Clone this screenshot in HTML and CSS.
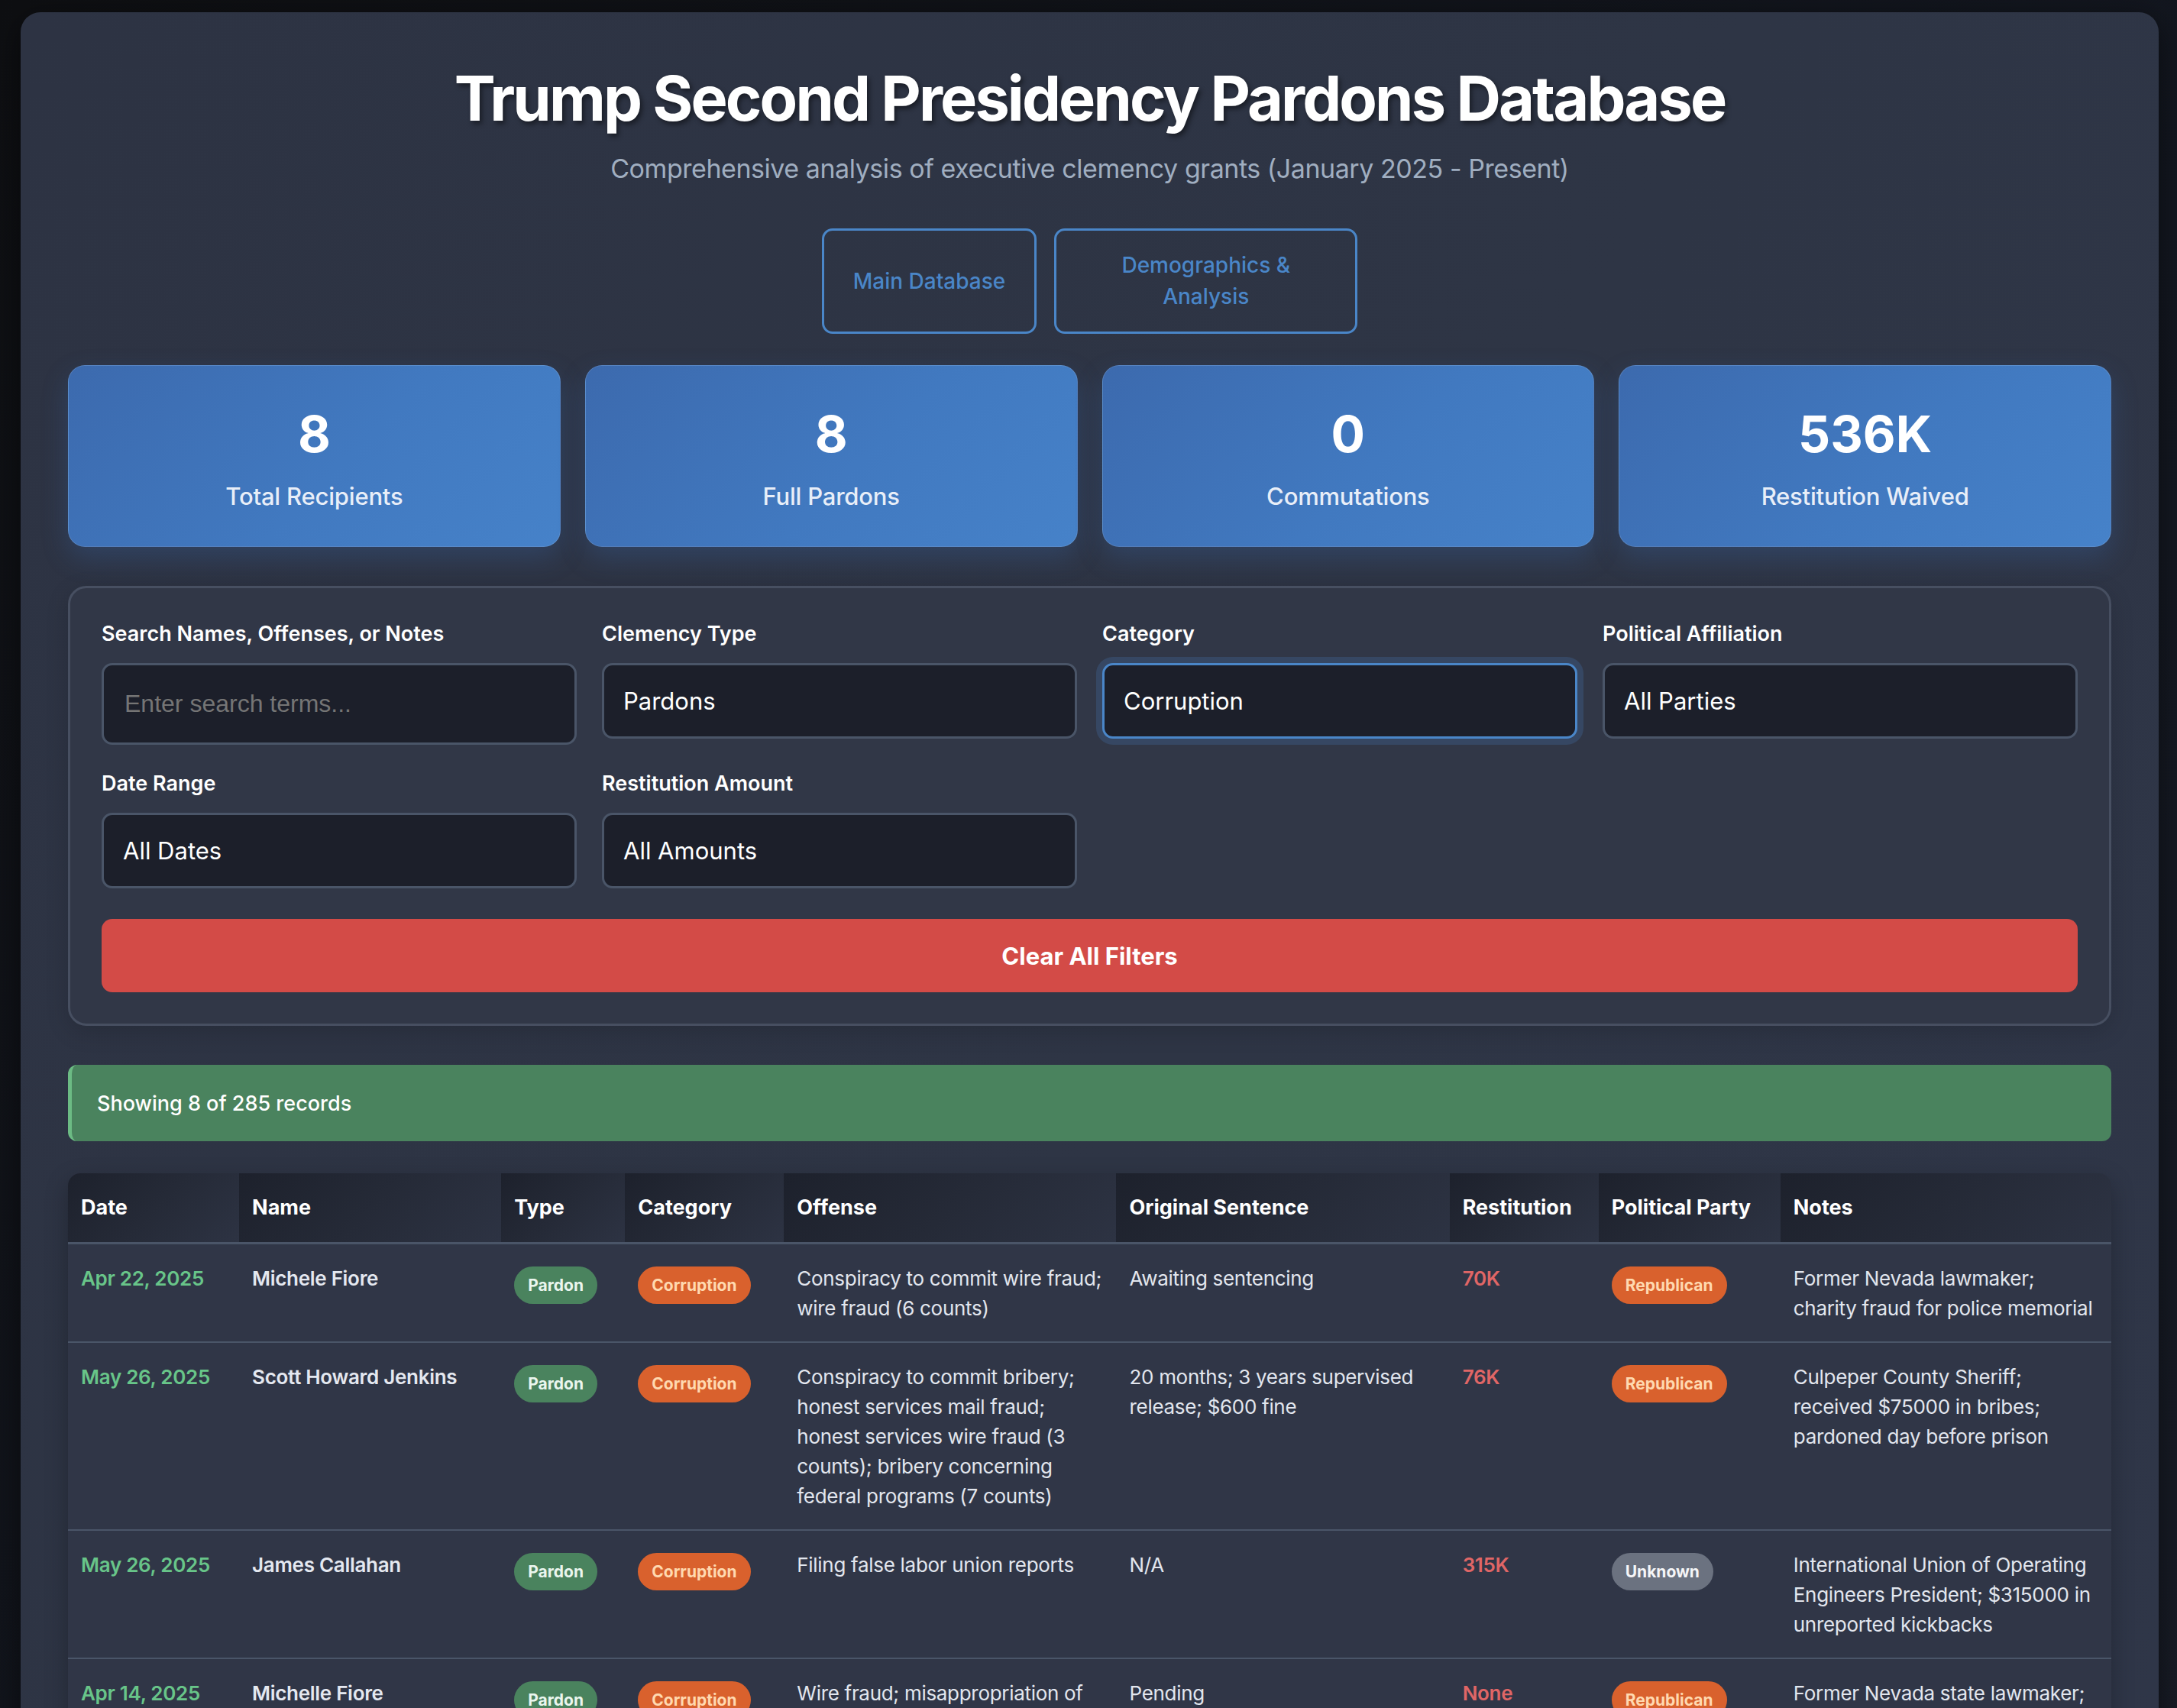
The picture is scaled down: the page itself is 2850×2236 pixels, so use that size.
FILE: index.html
```html
<!DOCTYPE html>
<html lang="en">
<head>
<meta charset="utf-8">
<title>Trump Second Presidency Pardons Database</title>
<link rel="stylesheet" href="styles.css">
</head>
<body>
<div class="container">
  <header class="header">
    <h1 class="title">Trump Second Presidency Pardons Database</h1>
    <p class="subtitle">Comprehensive analysis of executive clemency grants (January 2025 - Present)</p>
    <nav class="nav">
      <button class="nav-btn">Main Database</button>
      <button class="nav-btn nav-btn-wide">Demographics &amp; Analysis</button>
    </nav>
  </header>

  <section class="stats">
    <div class="stat-card"><div class="stat-num">8</div><div class="stat-label">Total Recipients</div></div>
    <div class="stat-card"><div class="stat-num">8</div><div class="stat-label">Full Pardons</div></div>
    <div class="stat-card"><div class="stat-num">0</div><div class="stat-label">Commutations</div></div>
    <div class="stat-card"><div class="stat-num">536K</div><div class="stat-label">Restitution Waived</div></div>
  </section>

  <section class="filters">
    <div class="filter-grid">
      <div class="field">
        <label class="field-label">Search Names, Offenses, or Notes</label>
        <input class="text-input" type="text" placeholder="Enter search terms...">
      </div>
      <div class="field">
        <label class="field-label">Clemency Type</label>
        <select class="select"><option>Pardons</option></select>
      </div>
      <div class="field">
        <label class="field-label">Category</label>
        <select class="select select-focus"><option>Corruption</option></select>
      </div>
      <div class="field">
        <label class="field-label">Political Affiliation</label>
        <select class="select"><option>All Parties</option></select>
      </div>
      <div class="field">
        <label class="field-label">Date Range</label>
        <select class="select"><option>All Dates</option></select>
      </div>
      <div class="field">
        <label class="field-label">Restitution Amount</label>
        <select class="select"><option>All Amounts</option></select>
      </div>
    </div>
    <button class="clear-btn">Clear All Filters</button>
  </section>

  <div class="results-bar">Showing 8 of 285 records</div>

  <div class="table-wrap">
    <table class="data-table">
      <colgroup>
        <col class="c-date"><col class="c-name"><col class="c-type"><col class="c-cat"><col class="c-off"><col class="c-sent"><col class="c-rest"><col class="c-party"><col class="c-notes">
      </colgroup>
      <thead>
        <tr>
          <th>Date</th><th>Name</th><th>Type</th><th>Category</th><th>Offense</th><th>Original Sentence</th><th>Restitution</th><th>Political Party</th><th>Notes</th>
        </tr>
      </thead>
      <tbody>
        <tr>
          <td class="date">Apr 22, 2025</td>
          <td class="name">Michele Fiore</td>
          <td><span class="badge badge-pardon">Pardon</span></td>
          <td><span class="badge badge-orange">Corruption</span></td>
          <td>Conspiracy to commit wire fraud; wire fraud (6 counts)</td>
          <td>Awaiting sentencing</td>
          <td class="money">70K</td>
          <td><span class="badge badge-orange">Republican</span></td>
          <td>Former Nevada lawmaker; charity fraud for police memorial</td>
        </tr>
        <tr>
          <td class="date">May 26, 2025</td>
          <td class="name">Scott Howard Jenkins</td>
          <td><span class="badge badge-pardon">Pardon</span></td>
          <td><span class="badge badge-orange">Corruption</span></td>
          <td>Conspiracy to commit bribery; honest services mail fraud; honest services wire fraud (3 counts); bribery concerning federal programs (7 counts)</td>
          <td>20 months; 3 years supervised release; $600 fine</td>
          <td class="money">76K</td>
          <td><span class="badge badge-orange">Republican</span></td>
          <td>Culpeper County Sheriff; received $75000 in bribes; pardoned day before prison</td>
        </tr>
        <tr>
          <td class="date">May 26, 2025</td>
          <td class="name">James Callahan</td>
          <td><span class="badge badge-pardon">Pardon</span></td>
          <td><span class="badge badge-orange">Corruption</span></td>
          <td>Filing false labor union reports</td>
          <td>N/A</td>
          <td class="money">315K</td>
          <td><span class="badge badge-grey">Unknown</span></td>
          <td>International Union of Operating Engineers President; $315000 in unreported kickbacks</td>
        </tr>
        <tr>
          <td class="date">Apr 14, 2025</td>
          <td class="name">Michelle Fiore</td>
          <td><span class="badge badge-pardon">Pardon</span></td>
          <td><span class="badge badge-orange">Corruption</span></td>
          <td>Wire fraud; misappropriation of charitable funds</td>
          <td>Pending</td>
          <td class="money">None</td>
          <td><span class="badge badge-orange">Republican</span></td>
          <td>Former Nevada state lawmaker; pardoned before sentencing</td>
        </tr>
      </tbody>
    </table>
  </div>
</div>
</body>
</html>
```

FILE: styles.css
```css
* { box-sizing: border-box; }

html, body {
  margin: 0;
}

body {
  background: linear-gradient(135deg, #0e0f12 0%, #131720 60%, #181c26 100%);
  padding: 16px 24px 0 27px;
  font-family: Inter, "Noto Sans", "Liberation Sans", sans-serif;
  color: #e2e8f0;
  min-height: 2236px;
}

.container {
  background: linear-gradient(120deg, #2d3343 0%, #2e3545 55%, #2f3648 100%);
  border-radius: 26px;
  padding: 65px 62px 60px;
  box-shadow: 0 10px 40px rgba(0, 0, 0, 0.5);
}

/* Header */
.header {
  text-align: center;
}

.title {
  margin: 0 0 18px;
  font-size: 81px;
  line-height: 96px;
  font-weight: 700;
  letter-spacing: -2.9px;
  color: #ffffff;
  text-shadow: 3px 4px 6px rgba(0, 0, 0, 0.45);
}

.subtitle {
  margin: 0 0 53px;
  font-size: 34px;
  line-height: 51px;
  letter-spacing: -0.45px;
  color: #a0aec0;
  font-weight: 400;
}

.nav {
  display: flex;
  justify-content: center;
  gap: 23px;
  margin-bottom: 41px;
}

.nav-btn {
  font-family: Inter, "Noto Sans", sans-serif;
  font-size: 28px;
  line-height: 41px;
  font-weight: 500;
  color: #4a86c8;
  background: transparent;
  border: 3px solid #4a86c8;
  border-radius: 14px;
  padding: 25px 38px;
  white-space: nowrap;
}

.nav-btn-wide {
  width: 397px;
  white-space: normal;
}

/* Stats */
.stats {
  display: grid;
  grid-template-columns: repeat(4, 1fr);
  gap: 32px;
  margin-bottom: 51px;
}

.stat-card {
  height: 238px;
  border-radius: 22px;
  background: linear-gradient(135deg, #3c6aae 0%, #4179c0 55%, #4682c9 100%);
  border: 1px solid rgba(255, 255, 255, 0.12);
  box-shadow: 0 14px 34px rgba(58, 108, 178, 0.28);
  text-align: center;
  padding: 50px 20px 40px;
  color: #ffffff;
}

.stat-num {
  font-size: 66px;
  line-height: 79px;
  font-weight: 700;
  margin-bottom: 19px;
}

.stat-label {
  font-size: 31px;
  line-height: 46px;
  font-weight: 500;
  letter-spacing: -0.2px;
  color: #e8eef8;
}

/* Filters */
.filters {
  background: #313747;
  border: 3px solid #474f61;
  border-radius: 24px;
  padding: 44px 41px 41px;
  margin-bottom: 51px;
  box-shadow: 0 8px 30px rgba(0, 0, 0, 0.15);
}

.filter-grid {
  display: grid;
  grid-template-columns: repeat(4, 1fr);
  column-gap: 33px;
  row-gap: 35px;
  align-items: start;
}

.field {
  display: flex;
  flex-direction: column;
}

.field-label {
  font-size: 27px;
  line-height: 32px;
  font-weight: 600;
  color: #ffffff;
  margin-bottom: 22px;
}

.text-input {
  height: 107px;
  background: #1c1f2a;
  border: 3px solid #4a5568;
  border-radius: 14px;
  padding: 0 27px;
  font-family: "Liberation Sans", Arial, sans-serif;
  font-size: 32px;
  color: #ffffff;
  outline: none;
}

.text-input::placeholder {
  color: #757575;
}

.select {
  -webkit-appearance: none;
  appearance: none;
  height: 99px;
  background: #1c1f2a;
  border: 3px solid #4a5568;
  border-radius: 14px;
  padding: 0 25px;
  font-family: Inter, "Noto Sans", sans-serif;
  font-size: 31px;
  color: #ffffff;
  outline: none;
}

.select-focus {
  border-color: #4a86c8;
  box-shadow: 0 0 0 8px rgba(74, 134, 200, 0.22);
}

.clear-btn {
  display: block;
  width: 100%;
  height: 96px;
  margin-top: 40px;
  background: #d34b47;
  border: none;
  border-radius: 14px;
  color: #ffffff;
  font-family: Inter, "Noto Sans", sans-serif;
  font-size: 31px;
  font-weight: 700;
}

/* Results bar */
.results-bar {
  height: 100px;
  display: flex;
  align-items: center;
  background: #4a835e;
  border-left: 5px solid #6cbb84;
  border-radius: 12px;
  padding: 0 33px;
  font-size: 27px;
  font-weight: 500;
  color: #ffffff;
  margin-bottom: 42px;
}

/* Table */
.table-wrap {
  border-radius: 16px 16px 0 0;
  overflow: hidden;
  background: #303647;
  box-shadow: 0 10px 30px rgba(0, 0, 0, 0.25);
}

.data-table {
  width: 100%;
  table-layout: fixed;
  border-collapse: collapse;
}

.c-date { width: 224px; }
.c-name { width: 343px; }
.c-type { width: 162px; }
.c-cat { width: 208px; }
.c-off { width: 435px; }
.c-sent { width: 436px; }
.c-rest { width: 195px; }
.c-party { width: 238px; }
.c-notes { width: 433px; }

.data-table th {
  text-align: left;
  font-size: 27px;
  line-height: 40px;
  font-weight: 700;
  color: #ffffff;
  padding: 25px 14px 25px 17px;
  background: linear-gradient(135deg, #1d212c 0%, #252a37 50%, #2d3343 100%);
  border-bottom: 3px solid #4a5568;
}

.data-table td {
  vertical-align: top;
  font-size: 26px;
  line-height: 39px;
  letter-spacing: -0.3px;
  color: #e2e6ee;
  padding: 25px 13px 24px 17px;
  border-bottom: 2px solid #4a5568;
}

.data-table td.date {
  color: #68c589;
  font-weight: 600;
}

.data-table td.name {
  font-weight: 600;
  color: #e4e8f0;
}

.data-table td.money {
  color: #e06666;
  font-weight: 600;
}

.badge {
  display: inline-block;
  vertical-align: top;
  margin-top: 4px;
  padding: 11px 18px;
  border-radius: 25px;
  font-size: 21px;
  line-height: 27px;
  letter-spacing: 0;
  font-weight: 700;
}

.badge-pardon {
  background: #4a835e;
  color: #eaf6ee;
}

.badge-orange {
  background: #d9612d;
  color: #ffd9b0;
}

.badge-grey {
  background: #6b7280;
  color: #f5f6f8;
}
```
